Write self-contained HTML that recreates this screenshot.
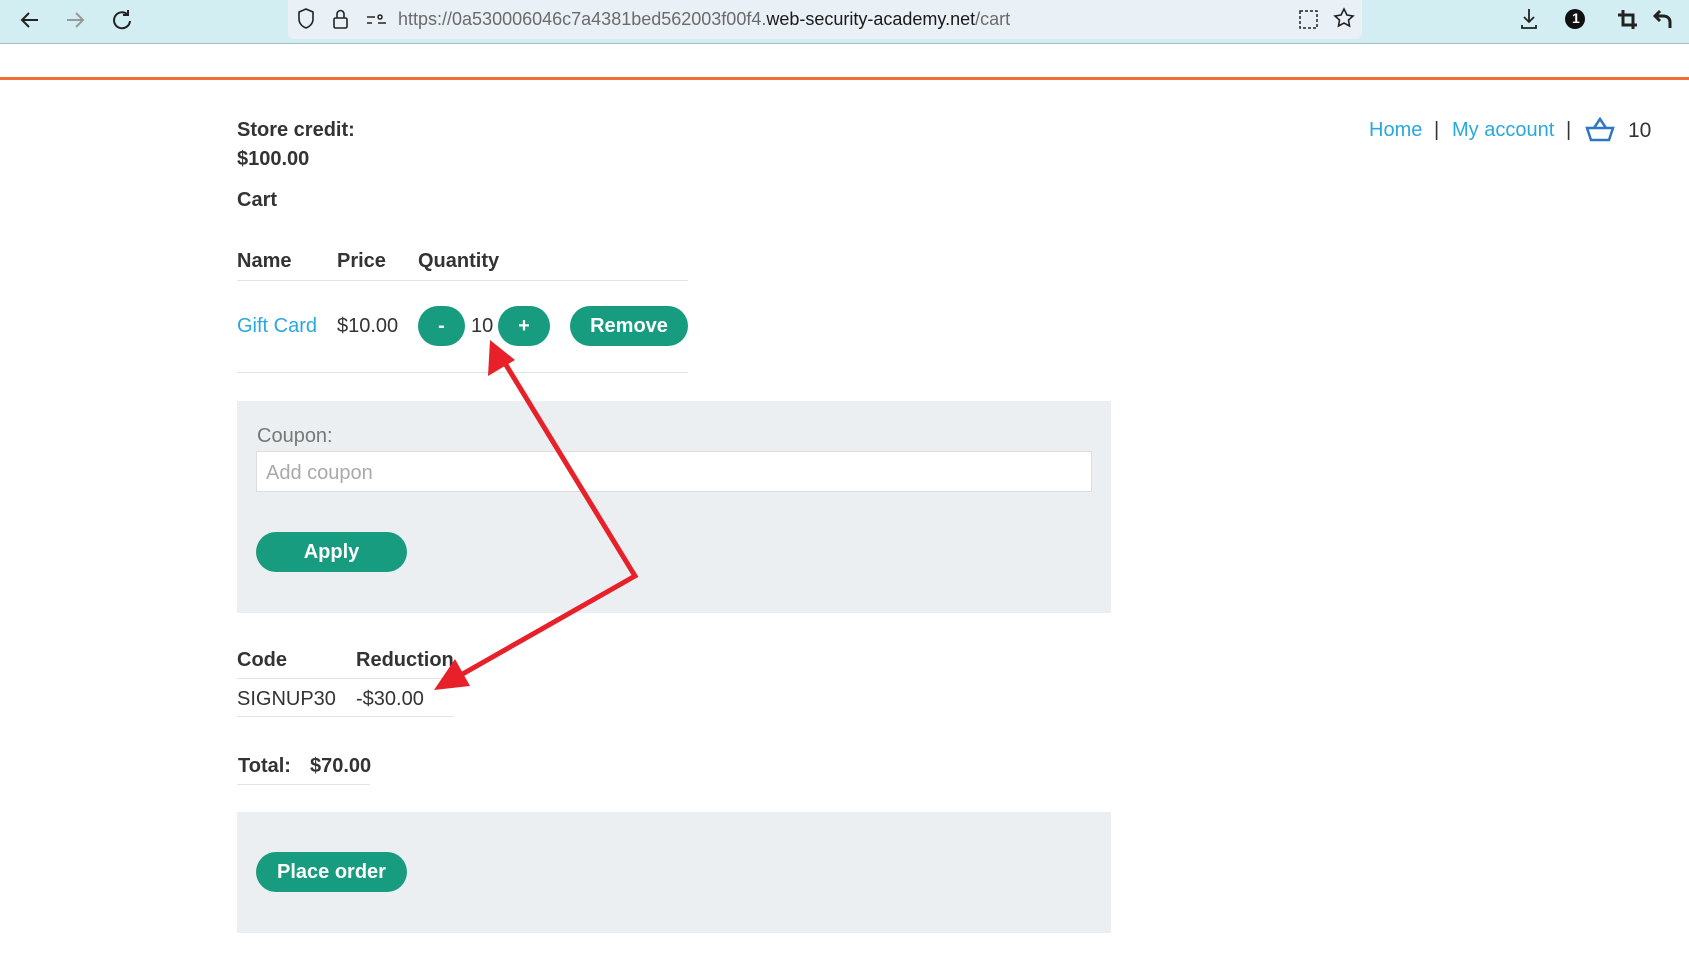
<!DOCTYPE html>
<html><head><meta charset="utf-8"><style>
*{margin:0;padding:0;box-sizing:border-box}
body{width:1689px;height:956px;overflow:hidden;background:#fff;font-family:"Liberation Sans",Arial,sans-serif;color:#333;position:relative}
.a{position:absolute;white-space:nowrap}
.bar{position:absolute;left:0;top:0;width:1689px;height:44px;background:#d3eef3;border-bottom:1px solid #a9b8bc}
.url{position:absolute;left:288px;top:0;width:1074px;height:39px;background:#e9f0f6;border-radius:0 0 6px 6px}
.b{font-weight:bold;font-size:20px;color:#333}
.t{font-size:20px}
.lnk{color:#29a8e0;font-size:20px}
.btn{position:absolute;background:#179c7f;color:#fff;font-weight:bold;font-size:20px;border-radius:20px;text-align:center;line-height:41px;height:40px}
.hl{position:absolute;height:1px;background:#e4e4e4}
.box{position:absolute;background:#ebeff1}
</style></head><body>
<div class="bar"></div>
<div class="url"></div>
<svg class="a" style="left:0;top:0" width="1689" height="44" fill="none" stroke="#222" stroke-width="2">
<path d="M38 20H22M29 13l-7 7 7 7"/>
<path d="M67 20h16M76 13l7 7-7 7" stroke="#999"/>
<path d="M127 14a8 8 0 1 0 3 7M128 10v5h-5"/>
<path d="M313 12l-7-3-7 3v7c0 5 4 8 7 9 3-1 7-4 7-9z" stroke-width="1.6"/>
<rect x="334" y="18" width="13" height="10" rx="1.5" stroke-width="1.6"/><path d="M337 18v-4a3.5 3.5 0 0 1 7 0v4" stroke-width="1.6"/>
<path d="M367 17h8M367 23h5M378 23h8" stroke-width="1.6"/><circle cx="380" cy="17" r="2" stroke-width="1.5"/>
<rect x="1300" y="11" width="17" height="17" stroke-width="1.5" stroke-dasharray="3 2"/>
<path d="M1344 9l3 6 6 1-4.5 4 1 6-5.5-3-5.5 3 1-6-4.5-4 6-1z" stroke-width="1.6"/>
<path d="M1529 9v13M1524 17l5 5 5-5M1522 25v3h14v-3" stroke-width="1.8"/>
<circle cx="1575" cy="19" r="10" fill="#111" stroke="none"/>
<path d="M1623 10v15h14M1618 15h15v14" stroke-width="3"/>
<path d="M1670 28v-6c0-4-3-6-7-6h-7M1660 11l-5 5 5 5" stroke-width="3"/>
</svg>
<div class="a" style="left:1572px;top:10px;color:#fff;font-weight:bold;font-size:14px">1</div>
<div class="a" style="left:398px;top:9px;font-size:18px;color:#6b6b6b">https://0a530006046c7a4381bed562003f00f4.<span style="color:#1a1a1a">web-security-academy.net</span>/cart</div>
<div class="a" style="left:0;top:77px;width:1689px;height:3px;background:#f26c36"></div>

<div class="a lnk" style="left:1369px;top:119px">Home</div>
<div class="a t" style="left:1434px;top:119px">|</div>
<div class="a lnk" style="left:1452px;top:119px">My account</div>
<div class="a t" style="left:1566px;top:119px">|</div>
<svg class="a" style="left:1585px;top:115px" width="30" height="28" fill="none" stroke="#2c75c8" stroke-width="2.5"><path d="M2 13h26l-4 12H6zM9 13l6-9 6 9"/></svg>
<div class="a t" style="left:1628px;top:119px;font-size:21px">10</div>

<div class="a b" style="left:237px;top:119px">Store credit:</div>
<div class="a b" style="left:237px;top:148px">$100.00</div>
<div class="a b" style="left:237px;top:189px">Cart</div>
<div class="a b" style="left:237px;top:250px">Name</div>
<div class="a b" style="left:337px;top:250px">Price</div>
<div class="a b" style="left:418px;top:250px">Quantity</div>
<div class="hl" style="left:237px;top:280px;width:451px"></div>
<div class="a lnk" style="left:237px;top:315px">Gift Card</div>
<div class="a t" style="left:337px;top:315px">$10.00</div>
<div class="btn" style="left:418px;top:306px;width:47px">-</div>
<div class="a t" style="left:471px;top:315px">10</div>
<div class="btn" style="left:498px;top:306px;width:52px">+</div>
<div class="btn" style="left:570px;top:306px;width:118px">Remove</div>
<div class="hl" style="left:237px;top:372px;width:451px"></div>

<div class="box" style="left:237px;top:401px;width:874px;height:212px"></div>
<div class="a t" style="left:257px;top:425px;color:#777">Coupon:</div>
<div class="a" style="left:256px;top:451px;width:836px;height:41px;background:#fff;border:1px solid #ddd"></div>
<div class="a t" style="left:266px;top:462px;color:#aaa">Add coupon</div>
<div class="btn" style="left:256px;top:532px;width:151px">Apply</div>

<div class="a b" style="left:237px;top:649px">Code</div>
<div class="a b" style="left:356px;top:649px">Reduction</div>
<div class="hl" style="left:237px;top:678px;width:217px"></div>
<div class="a t" style="left:237px;top:688px">SIGNUP30</div>
<div class="a t" style="left:356px;top:688px">-$30.00</div>
<div class="hl" style="left:237px;top:716px;width:217px"></div>
<div class="a b" style="left:238px;top:755px">Total:</div>
<div class="a b" style="left:310px;top:755px">$70.00</div>
<div class="hl" style="left:237px;top:784px;width:133px"></div>

<div class="box" style="left:237px;top:812px;width:874px;height:121px"></div>
<div class="btn" style="left:256px;top:852px;width:151px">Place order</div>

<svg class="a" style="left:0;top:0" width="1689" height="956">
<path d="M503 360L635 576L452 680" fill="none" stroke="#e8202a" stroke-width="5"/>
<path d="M490 340l-2 36 27-16z" fill="#e8202a"/>
<path d="M434 690l36-4-15-27z" fill="#e8202a"/>
</svg>
</body></html>
